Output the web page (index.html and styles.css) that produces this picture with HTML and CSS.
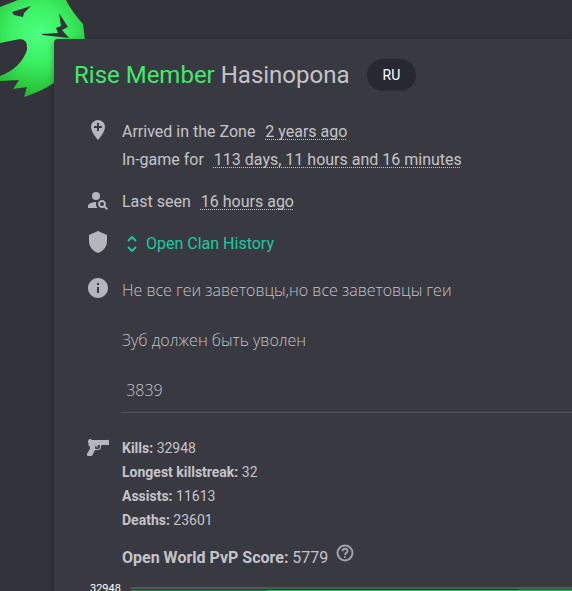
FILE: index.html
```html
<!DOCTYPE html>
<html lang="en">
<head>
    <meta charset="UTF-8">
    <meta name="viewport" content="width=device-width, initial-scale=1.0">
    <title>Hasinopona</title>
    <link rel="stylesheet" href="styles.css">
</head>
<body>
    <svg class="emblem" viewBox="0 0 90 100" aria-hidden="true">
        <defs>
            <radialGradient id="glow" gradientUnits="userSpaceOnUse" cx="38" cy="34" r="72">
                <stop offset="0" stop-color="#4dff80"/>
                <stop offset="0.4" stop-color="#3cf063"/>
                <stop offset="1" stop-color="#1fac20"/>
            </radialGradient>
        </defs>
        <path fill="url(#glow)" d="M0 7L18 0H66Q72 12 83 24L85 40V60L54 83Q40 92 24 97L27 87L13 89L19 80L0 81V76Q21 68 27 50Q28 39 20 39L0 43Z"/>
        <path fill="#33333c" d="M12 12L31 6L24 13L23 17L14 15Z"/>
        <path fill="#33333c" d="M59 13L68 27L62 30L69 38L42 35V34L58 33L56 28L61 26Z"/>
    </svg>

    <main class="card">
        <h1 class="title">
            <span><span class="rank">Rise Member</span> Hasinopona</span>
            <span class="chip">RU</span>
        </h1>

        <section class="row arrived">
            <svg class="icon" viewBox="0 0 24 24"><path d="M12 2C8.1 2 5 5.1 5 9c0 5.3 7 13 7 13s7-7.700 7-13c0-3.900-3.100-7-7-7zm4 8h-3v3h-2v-3H8V8h3V5h2v3h3v2z"/></svg>
            <div>
                <p>Arrived in the Zone <span class="date">2 years ago</span></p>
                <p>In-game for <span class="date">113 days, 11 hours and 16 minutes</span></p>
            </div>
        </section>

        <section class="row seen">
            <svg class="icon" viewBox="0 0 24 24"><circle cx="10" cy="8" r="4"/><path d="M10.350 14.010C7.620 13.910 2 15.270 2 18v2h9.540c-2.470-2.760-1.230-5.890-1.190-5.990zM19.430 18.020c.360-.59.570-1.280.570-2.020 0-2.210-1.790-4-4-4s-4 1.790-4 4 1.790 4 4 4c.740 0 1.430-.220 2.020-.570L20.590 22 22 20.590l-2.570-2.570zM16 18c-1.100 0-2-.9-2-2s.9-2 2-2 2 .9 2 2-.9 2-2 2z"/></svg>
            <p>Last seen <span class="date">16 hours ago</span></p>
        </section>

        <section class="row clan">
            <svg class="icon" viewBox="0 0 24 24"><path d="M12 1L3 5v6c0 5.550 3.840 10.740 9 12 5.160-1.260 9-6.450 9-12V5l-9-4z"/></svg>
            <button class="history" type="button">
                <svg class="unfold" viewBox="0 0 16 16"><path d="M4 5L8 1L12 5M4 11L8 15L12 11"/></svg>
                Open Clan History
            </button>
        </section>

        <section class="row about">
            <svg class="icon" viewBox="0 0 24 24"><path d="M12 2C6.480 2 2 6.480 2 12s4.480 10 10 10 10-4.480 10-10S17.520 2 12 2zm1 15h-2v-6h2v6zm0-8h-2V7h2v2z"/></svg>
            <div class="bio">
                <p>Не все геи заветовцы,но все заветовцы геи</p>
                <p>Зуб должен быть уволен</p>
                <p>&nbsp;3839</p>
            </div>
        </section>

        <section class="row stats">
            <svg class="icon" viewBox="0 0 24 24"><path fill-rule="evenodd" d="M2.500 4L3.500 3H5L5.500 4H22L22.500 3.500L23 5V9H16L15 10V11Q15 14 12 14H9.600Q9.100 14 8.800 14.500L6.400 19.300Q6.100 20 5.300 20H2Q.5 20 1 18Q2 16 3.500 13.500Q5 11 2.500 9.500V7Q1 6 2.500 4ZM14 10Q14 9 13 9H12Q11 10 12 12Q10 11 10 9.500Q9 10 9 12Q9 13 10 13H12Q14 13 14 11Z"/></svg>
            <div>
                <ul class="kills">
                    <li><b>Kills:</b> 32948</li>
                    <li><b>Longest killstreak:</b> 32</li>
                    <li><b>Assists:</b> 11613</li>
                    <li><b>Deaths:</b> 23601</li>
                </ul>
                <p class="score">
                    <span><b>Open World PvP Score:</b> 5779</span>
                    <svg class="help" viewBox="0 0 18 18"><circle cx="9" cy="9" r="7.500"/><path d="M6.500 7.300Q6.500 4.800 9 4.800T11.500 7.200C11.500 8.700 9 9 9 11M9 12.200V13.700"/></svg>
                </p>
            </div>
        </section>

        <div class="chart">
            <span class="axis">32948</span>
            <svg class="plot" viewBox="0 0 440 80" preserveAspectRatio="none">
                <path class="grid" d="M0 1H440"/>
                <path class="trend" d="M0 4.500H136V4H387V3.700H440"/>
            </svg>
        </div>
    </main>
</body>
</html>
```
FILE: styles.css
```css
* {
    box-sizing: border-box;
}
body {
    margin: 0;
    height: 100vh;
    overflow: hidden;
    font-family: Roboto, sans-serif;
    font-size: 16px;
    line-height: 28px;
    color: #c4c4c8;
    background-color: #33333c;
}
h1, p, ul {
    margin: 0;
    padding: 0;
}
.emblem {
    position: absolute;
    top: 0;
    left: 0;
    width: 90px;
    height: 100px;
}
.card {
    position: relative;
    margin: 39px 0 0 54px;
    padding: 20px 0 0 20px;
    border-radius: 4px 0 0 0;
    background-color: #393941;
    box-shadow: 0 2px 6px rgba(0, 0, 0, 0.3);
}
.title {
    display: flex;
    align-items: center;
    gap: 17px;
    font-size: 24px;
    font-weight: 400;
    line-height: 32px;
}
.rank {
    color: #41e969;
}
.chip {
    padding: 0 16px;
    border-radius: 16px;
    font-size: 14px;
    color: #fff;
    background-color: #282830;
}
.row {
    display: flex;
    gap: 12px;
    padding-left: 12px;
}
.icon {
    flex: none;
    width: 24px;
    height: 24px;
    fill: #b5b5bb;
}
.arrived {
    margin-top: 27px;
}
.seen, .clan {
    margin-top: 14px;
}
.date {
    margin-left: 6px;
    text-decoration: underline dotted 1px;
    text-decoration-skip-ink: none;
    text-underline-offset: 2px;
}
.history {
    display: flex;
    align-items: center;
    gap: 6px;
    padding: 0 2px;
    border: none;
    font: inherit;
    color: #1cc9a0;
    background: none;
    cursor: pointer;
}
.unfold {
    width: 16px;
    height: 16px;
    fill: none;
    stroke: currentColor;
    stroke-width: 2;
}
.about {
    margin-top: 18px;
}
.bio {
    flex: 1;
    padding-bottom: 8px;
    border-bottom: 1px solid #55555b;
    font-family: "Open Sans", sans-serif;
    font-weight: 300;
}
.bio p + p {
    margin-top: 22px;
}
.stats {
    margin-top: 23px;
}
.kills {
    list-style: none;
    font-size: 14px;
    line-height: 24px;
}
.score {
    display: flex;
    gap: 8px;
    margin-top: 12px;
}
.help {
    width: 18px;
    height: 18px;
    fill: none;
    stroke: #a0a0a6;
    stroke-width: 2;
}
.chart {
    display: flex;
    gap: 10px;
    margin-top: 9px;
    padding-left: 16px;
}
.axis {
    font-size: 11px;
    line-height: 16px;
    color: #fff;
}
.plot {
    flex: 1;
    height: 80px;
    margin-top: 6px;
}
.grid, .trend {
    fill: none;
    stroke: #56565b;
    stroke-width: 2;
}
.trend {
    stroke: #08c957;
}
```
